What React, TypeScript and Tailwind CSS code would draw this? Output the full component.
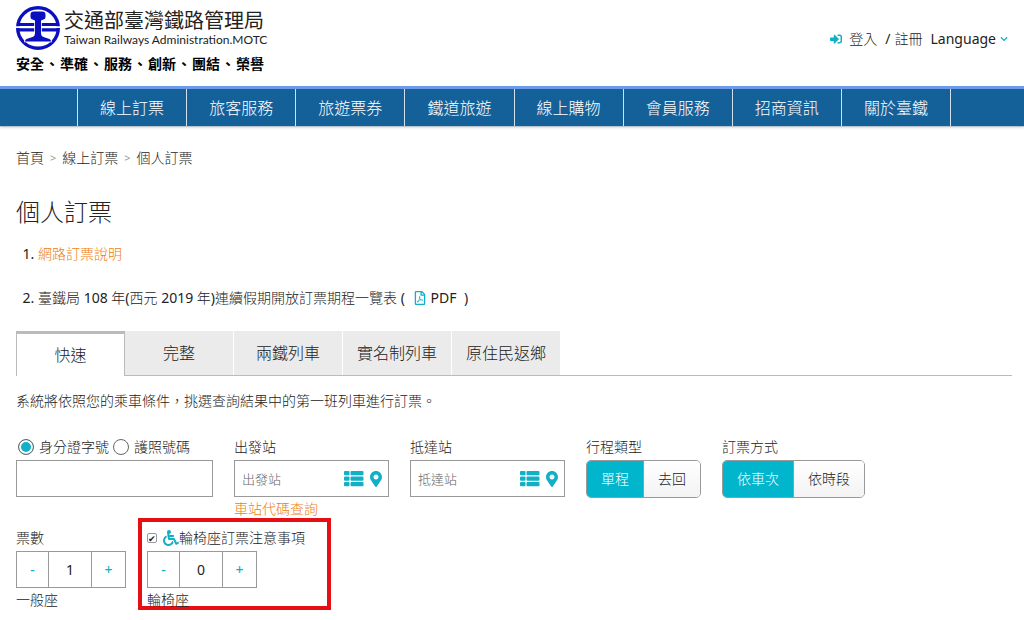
import { useState } from 'react';
import { FaSignInAlt, FaMapMarkerAlt, FaRegFilePdf, FaWheelchair, FaChevronDown } from 'react-icons/fa';

const navItems = ['線上訂票', '旅客服務', '旅遊票券', '鐵道旅遊', '線上購物', '會員服務', '招商資訊', '關於臺鐵'];
const tabs = ['快速', '完整', '兩鐵列車', '實名制列車', '原住民返鄉'];
const slogan = ['安全', '、', '準確', '、', '服務', '、', '創新', '、', '團結', '、', '榮譽'];

function Logo() {
  return (
    <svg viewBox="0 0 44 44" className="w-11 h-11 shrink-0" aria-hidden="true">
      <circle cx="22" cy="22" r="20.300" fill="none" stroke="#0a0fc0" strokeWidth="3.400" />
      <path d="M1 18.500h42M1 23.800h42" stroke="#0a0fc0" strokeWidth="3.200" />
      <path d="M0 21.150h44" stroke="#fff" strokeWidth="1.800" />
      <path
        d="M18 5.500h8q3.500 0 3.500 3v2.500q0 2-2 2.500l-2.500 1v13q0 2.500 2.500 3.500l6 2q1.500.5 1.500 2.500H9q0-2 1.500-2.500l6-2q2.500-1 2.500-3.500v-13l-2.500-1Q14.500 13 14.500 11V8.500q0-3 3.500-3z"
        fill="#0a0fc0"
        stroke="#fff"
        strokeWidth="1.600"
        paintOrder="stroke"
      />
    </svg>
  );
}

function ListIcon() {
  return (
    <svg viewBox="0 0 20 16" className="w-5 h-4" fill="currentColor" aria-hidden="true">
      <rect x="0" y="0" width="5.500" height="4.300" rx="1" />
      <rect x="6.500" y="0" width="13" height="4.300" rx="1" />
      <rect x="0" y="5.500" width="5.500" height="4.300" rx="1" />
      <rect x="6.500" y="5.500" width="13" height="4.300" rx="1" />
      <rect x="0" y="11" width="5.500" height="4.300" rx="1" />
      <rect x="6.500" y="11" width="13" height="4.300" rx="1" />
    </svg>
  );
}

function StationField({ id, label }: { id: string; label: string }) {
  return (
    <div className="w-[155px]">
      <label htmlFor={id} className="block mb-[3px]">{label}</label>
      <div className="flex items-center h-[37px] border border-[#999] bg-white pl-[7px] pr-1">
        <input id={id} type="text" placeholder={label} className="flex-1 min-w-0 text-[13px] placeholder:text-[#666] focus:outline-none" />
        <button type="button" aria-label={label + '清單'} className="text-[#12b0c6] mr-1.5">
          <ListIcon />
        </button>
        <button type="button" aria-label={label + '地圖'} className="text-[#12b0c6] mr-0.5">
          <FaMapMarkerAlt className="w-3 h-4" />
        </button>
      </div>
    </div>
  );
}

function Toggle({ label, options }: { label: string; options: string[] }) {
  const [selected, setSelected] = useState(options[0]);

  return (
    <div role="group" aria-label={label}>
      <div className="mb-[3px]">{label}</div>
      <div className="flex h-[38px] border border-[#999] rounded-[5px] overflow-hidden">
        {options.map(option => (
          <button
            key={option}
            type="button"
            onClick={() => setSelected(option)}
            className={`px-3.5 border-r border-[#999] last:border-r-0 ${
              option === selected ? 'bg-[#00b5cc] text-white' : 'bg-linear-to-b from-white to-[#f3f3f3]'
            }`}
          >
            {option}
          </button>
        ))}
      </div>
    </div>
  );
}

function Stepper({ id, label, initial }: { id: string; label: string; initial: number }) {
  const [count, setCount] = useState(initial);

  return (
    <div>
      <div className="flex w-[110px] h-[37px] border border-[#999] bg-white">
        <button type="button" aria-label={label + '減少'} onClick={() => setCount(Math.max(0, count - 1))} className="w-[31px] font-medium text-[#12b0c6]">-</button>
        <input
          id={id}
          type="text"
          value={count}
          onChange={e => setCount(Number(e.target.value) || 0)}
          className="flex-1 min-w-0 text-center border-x border-[#999] focus:outline-none"
        />
        <button type="button" aria-label={label + '增加'} onClick={() => setCount(count + 1)} className="w-[33px] font-medium text-[#12b0c6]">+</button>
      </div>
      <label htmlFor={id} className="block mt-0.5">{label}</label>
    </div>
  );
}

export default function App() {
  const [idType, setIdType] = useState('id');
  const [tab, setTab] = useState(tabs[0]);
  const [wheelchair, setWheelchair] = useState(true);

  const radioClass =
    'appearance-none w-4 h-4 rounded-full border border-[#666] bg-white checked:bg-[#12b0c6] checked:shadow-[inset_0_0_0_2px_white]';

  return (
    <div className="bg-white text-sm leading-5 text-[#222] font-['Noto_Sans','Noto_Sans_CJK_TC_Light','Noto_Sans_CJK_TC',sans-serif]">
      {/* Header */}
      <header className="flex justify-between items-start h-[86px] px-4">
        <a href="#" className="flex flex-col w-[248px] pt-1.5">
          <span className="flex gap-1">
            <Logo />
            <span className="pt-0.5 text-[#222] whitespace-nowrap">
              <span className="block text-xl leading-6 font-['Noto_Sans_CJK_TC',sans-serif]">交通部臺灣鐵路管理局</span>
              <span className="block text-xs leading-4 font-[Lato,sans-serif]">Taiwan Railways Administration.MOTC</span>
            </span>
          </span>
          <span className="flex justify-between mt-[3px] font-bold text-black font-['Noto_Sans_CJK_TC',sans-serif]">
            {slogan.map((word, i) => <span key={i}>{word}</span>)}
          </span>
        </a>
        <div className="flex items-center pt-[29px]">
          <FaSignInAlt className="w-3.5 h-3 mr-1.5 text-[#12b0c6]" />
          <a href="#">登入</a>
          <span className="ml-2 mr-1">/</span>
          <a href="#">註冊</a>
          <button type="button" className="flex items-center gap-1 ml-2">
            Language
            <FaChevronDown className="w-2 h-2 text-[#12b0c6]" />
          </button>
        </div>
      </header>

      {/* Main nav */}
      <nav className="flex justify-center h-[41px] pl-1 border-t-[3px] border-t-[#6c9bea] border-b border-b-[#b9c4cc] bg-[#14619a] shadow-sm">
        <ul className="flex w-[874px] border-l border-[#d3e0ea]">
          {navItems.map(item => (
            <li key={item} className="flex-1 border-r border-[#d3e0ea]">
              <a href="#" className="flex h-full items-center justify-center text-base text-white">{item}</a>
            </li>
          ))}
        </ul>
      </nav>

      <main className="pl-4 pr-3 pb-3">
        <nav className="flex gap-1.5 pt-[21px]">
          <a href="#">首頁</a>
          <span className="text-[11px] leading-5 text-[#999]">&gt;</span>
          <a href="#">線上訂票</a>
          <span className="text-[11px] leading-5 text-[#999]">&gt;</span>
          <span>個人訂票</span>
        </nav>

        <h1 className="mt-7 text-2xl leading-8">個人訂票</h1>

        <ol className="mt-4 pl-[22px] list-decimal">
          <li><a href="#" className="text-[#f07c10]">網路訂票說明</a></li>
          <li className="mt-6">
            臺鐵局 108 年(西元 2019 年)連續假期開放訂票期程一覽表 ({' '}
            <a href="#" className="mx-1">
              <FaRegFilePdf className="inline w-3.5 h-3.5 mr-1 align-[-2px] text-[#12b0c6]" />
              PDF
            </a>
            {' '})
          </li>
        </ol>

        {/* Tabs */}
        <div role="tablist" className="flex items-start mt-[23px] h-[45px] border-b border-[#bbb]">
          {tabs.map(name => (
            <button
              key={name}
              type="button"
              role="tab"
              aria-selected={name === tab}
              onClick={() => setTab(name)}
              className={`w-[109px] text-base ${
                name === tab
                  ? 'h-[45px] border-x border-t-[3px] border-[#bbb] bg-white'
                  : 'h-11 bg-[#ebebeb] border-r border-white'
              }`}
            >
              {name}
            </button>
          ))}
        </div>

        <p className="mt-[15px]">系統將依照您的乘車條件，挑選查詢結果中的第一班列車進行訂票。</p>

        {/* Booking form */}
        <form className="mt-[26px]">
          <div className="flex items-start gap-[21px]">
            <div className="w-[197px]">
              <div className="flex items-center mb-[3px] pl-0.5">
                <input id="type-id" type="radio" name="idType" checked={idType === 'id'} onChange={() => setIdType('id')} className={radioClass} />
                <label htmlFor="type-id" className="ml-[5px] mr-1">身分證字號</label>
                <input id="type-passport" type="radio" name="idType" checked={idType === 'passport'} onChange={() => setIdType('passport')} className={radioClass} />
                <label htmlFor="type-passport" className="ml-[5px]">護照號碼</label>
              </div>
              <input type="text" aria-label="身分證字號" className="block w-full h-[37px] px-2 border border-[#999] focus:outline-none" />
            </div>
            <div>
              <StationField id="from" label="出發站" />
              <a href="#" className="block mt-0.5 text-[#f07c10]">車站代碼查詢</a>
            </div>
            <StationField id="to" label="抵達站" />
            <Toggle label="行程類型" options={['單程', '去回']} />
            <Toggle label="訂票方式" options={['依車次', '依時段']} />
          </div>

          <div className="flex items-start gap-[21px] mt-[9px]">
            <div>
              <div className="mb-[3px]">票數</div>
              <Stepper id="normal" label="一般座" initial={1} />
            </div>
            <div className="w-[193px] h-[92px] -mt-[10px] -ml-[9px] px-[5px] pt-1.5 border-4 border-[#e60f14]">
              <div className="flex items-center mb-[3px]">
                <input
                  id="wheelchair"
                  type="checkbox"
                  checked={wheelchair}
                  onChange={e => setWheelchair(e.target.checked)}
                  className="appearance-none grid place-content-center w-2.5 h-2.5 mr-1.5 border border-[#999] rounded-xs bg-white checked:before:content-['✔'] before:text-[9px] before:leading-none before:text-[#222]"
                />
                <label htmlFor="wheelchair" className="flex items-center">
                  <FaWheelchair className="w-4 h-4 text-[#12b0c6]" />
                  輪椅座訂票注意事項
                </label>
              </div>
              <Stepper id="wheelchair-seats" label="輪椅座" initial={0} />
            </div>
          </div>
        </form>
      </main>
    </div>
  );
}
